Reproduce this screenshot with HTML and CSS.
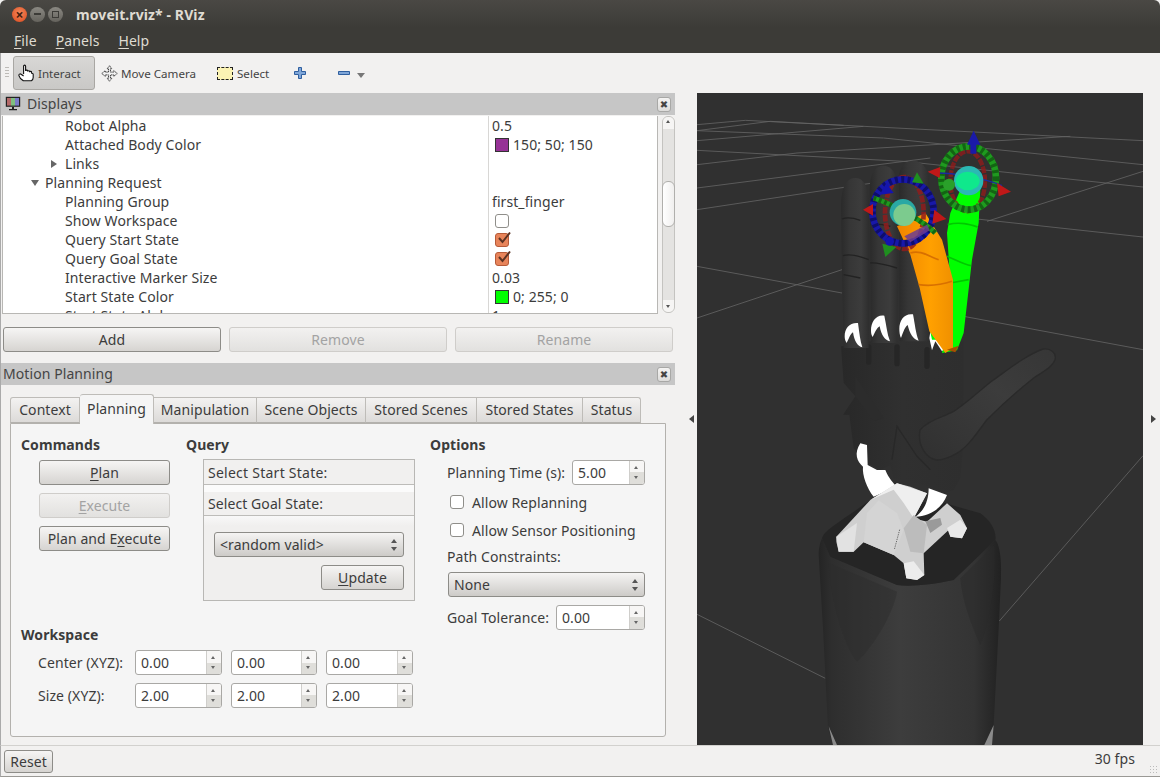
FILE: index.html
```html
<!DOCTYPE html>
<html lang="en">
<head>
<meta charset="utf-8">
<title>moveit.rviz* - RViz</title>
<link rel="stylesheet" href="styles.css">
</head>
<body>
<div class="window">
  <header class="titlebar">
    <div class="wm-buttons">
      <span class="wm wm-close">×</span>
      <span class="wm wm-min"><i class="wm-dash"></i></span>
      <span class="wm wm-max"><i class="wm-square"></i></span>
    </div>
    <span class="title-text">moveit.rviz* - RViz</span>
  </header>
  <nav class="menubar">
    <span class="menu-item"><u>F</u>ile</span>
    <span class="menu-item"><u>P</u>anels</span>
    <span class="menu-item"><u>H</u>elp</span>
  </nav>
  <div class="toolbar">
    <div class="grip"></div>
    <div class="tool tool-active">
      <svg class="ico-hand" viewBox="0 0 18 18"><path d="M5.600 10V2.200c0-1.500 2-1.500 2 0V7c0-1.200 2-1.200 2 0v.6c0-1.200 2-1.200 2 0v.6c0-1.100 2-1.100 2 0v1c0 .2 1.600-.2 1.600 1v3.300c0 1.600-.8 2.600-1.800 3.200H5.300C3.500 15.500 1.400 13.600.9 11.600c-.3-1.500 1.200-2 2.100-1.400L5.600 12" fill="#fff" stroke="#111" stroke-width="1.100"/></svg>
      <span>Interact</span>
    </div>
    <div class="tool tool-move">
      <svg class="ico-move" viewBox="0 0 18 18"><path d="M9 .8 11.500 4H10v3.500h3.500V6L17.200 9l-3.700 3v-1.500H10V14h1.500L9 17.200 6.500 14H8v-3.500H4.500V12L.8 9l3.700-3v1.500H8V4H6.500Z" fill="#f2f2f2" stroke="#333" stroke-width="1" stroke-dasharray="1.600 .6"/></svg>
      <span>Move Camera</span>
    </div>
    <div class="tool tool-select">
      <span class="ico-select"></span>
      <span>Select</span>
    </div>
    <svg class="ico-plus" viewBox="0 0 12 12"><path d="M4.500.5h3v4h4v3h-4v4h-3v-4h-4v-3h4Z" fill="#7fa6d8" stroke="#2f5f9f"/></svg>
    <svg class="ico-minus" viewBox="0 0 12 5"><path d="M.5.5h11v3H.5Z" fill="#7fa6d8" stroke="#2f5f9f"/></svg>
    <span class="tool-more"></span>
  </div>

  <main class="main">
    <section class="left">
      <div class="dock-title dock-title-icon">
        <svg class="ico-monitor" viewBox="0 0 16 15">
          <rect x=".8" y=".8" width="14.400" height="10" fill="#222"/>
          <rect x="2" y="2" width="4" height="7.600" fill="#b56a6a"/>
          <rect x="6" y="2" width="4" height="7.600" fill="#7fbf7f"/>
          <rect x="10" y="2" width="4" height="7.600" fill="#7a7ac8"/>
          <path d="M7 11h2v2h3v1.300H4V13h3Z" fill="#222"/>
        </svg>
        <span>Displays</span>
        <span class="dock-close">✖</span>
      </div>
      <div class="tree-wrap">
        <div class="tree">
          <div class="row"><div class="name lv3">Robot Alpha</div><div class="value">0.5</div></div>
          <div class="row"><div class="name lv3">Attached Body Color</div><div class="value"><i class="swatch swatch-purple"></i>150; 50; 150</div></div>
          <div class="row"><div class="name lv3"><i class="arrow-right"></i>Links</div><div class="value"></div></div>
          <div class="row"><div class="name lv2"><i class="arrow-down"></i>Planning Request</div><div class="value"></div></div>
          <div class="row"><div class="name lv3">Planning Group</div><div class="value">first_finger</div></div>
          <div class="row"><div class="name lv3">Show Workspace</div><div class="value"><i class="check"></i></div></div>
          <div class="row"><div class="name lv3">Query Start State</div><div class="value"><i class="check check-on"><svg viewBox="0 0 16 14"><path d="M3 7l3.500 4L14 1.500" fill="none" stroke="#5c3222" stroke-width="2"/></svg></i></div></div>
          <div class="row"><div class="name lv3">Query Goal State</div><div class="value"><i class="check check-on"><svg viewBox="0 0 16 14"><path d="M3 7l3.500 4L14 1.500" fill="none" stroke="#5c3222" stroke-width="2"/></svg></i></div></div>
          <div class="row"><div class="name lv3">Interactive Marker Size</div><div class="value">0.03</div></div>
          <div class="row"><div class="name lv3">Start State Color</div><div class="value"><i class="swatch swatch-green"></i>0; 255; 0</div></div>
          <div class="row"><div class="name lv3">Start State Alpha</div><div class="value">1</div></div>
        </div>
        <div class="scrollbar">
          <div class="sb-end sb-up"></div>
          <div class="sb-thumb"></div>
          <div class="sb-end sb-down"></div>
        </div>
      </div>
      <div class="dock-actions">
        <div class="btn btn-wide">Add</div>
        <div class="btn btn-wide btn-off">Remove</div>
        <div class="btn btn-wide btn-off">Rename</div>
      </div>
      <div class="splitter"></div>
      <div class="dock-title dock-title-plain">
        <span>Motion Planning</span>
        <span class="dock-close">✖</span>
      </div>
      <div class="tabs">
        <span class="tab tab-1">Context</span>
        <span class="tab tab-2 tab-active">Planning</span>
        <span class="tab tab-3">Manipulation</span>
        <span class="tab tab-4">Scene Objects</span>
        <span class="tab tab-5">Stored Scenes</span>
        <span class="tab tab-6">Stored States</span>
        <span class="tab tab-7">Status</span>
      </div>
      <div class="pane">
        <div class="col-left">
          <div class="top-row">
            <div class="commands">
              <h3>Commands</h3>
              <div class="btn cmd"><span><u>P</u>lan</span></div>
              <div class="btn cmd btn-off"><span><u>E</u>xecute</span></div>
              <div class="btn cmd"><span>Plan and E<u>x</u>ecute</span></div>
            </div>
            <div class="query">
              <h3>Query</h3>
              <div class="query-box">
                <div class="q-head q-head-1">Select Start State:</div>
                <div class="q-gap"></div>
                <div class="q-head q-head-2">Select Goal State:</div>
                <div class="q-body">
                  <div class="combo combo-q"><span>&lt;random valid&gt;</span><i class="updown"></i></div>
                  <div class="btn update"><span><u>U</u>pdate</span></div>
                </div>
              </div>
            </div>
          </div>
          <div class="workspace">
            <h3>Workspace</h3>
            <div class="ws-row">
              <span class="ws-label">Center (XYZ):</span>
              <div class="spin spin-87"><span class="spin-val">0.00</span><i class="spin-btn"></i></div>
              <div class="spin spin-86"><span class="spin-val">0.00</span><i class="spin-btn"></i></div>
              <div class="spin spin-87"><span class="spin-val">0.00</span><i class="spin-btn"></i></div>
            </div>
            <div class="ws-row">
              <span class="ws-label">Size (XYZ):</span>
              <div class="spin spin-87"><span class="spin-val">2.00</span><i class="spin-btn"></i></div>
              <div class="spin spin-86"><span class="spin-val">2.00</span><i class="spin-btn"></i></div>
              <div class="spin spin-87"><span class="spin-val">2.00</span><i class="spin-btn"></i></div>
            </div>
          </div>
        </div>
        <div class="col-right">
          <h3>Options</h3>
          <div class="opt-row opt-first"><span>Planning Time (s):</span><div class="spin spin-73"><span class="spin-val">5.00</span><i class="spin-btn"></i></div></div>
          <div class="chk-row chk-first"><i class="check check-plain"></i><span>Allow Replanning</span></div>
          <div class="chk-row"><i class="check check-plain"></i><span>Allow Sensor Positioning</span></div>
          <div class="opt-label">Path Constraints:</div>
          <div class="combo combo-opt"><span>None</span><i class="updown"></i></div>
          <div class="opt-row opt-last"><span>Goal Tolerance:</span><div class="spin spin-89"><span class="spin-val">0.00</span><i class="spin-btn"></i></div></div>
        </div>
      </div>
    </section>

    <div class="handle"><i class="tri-left"></i></div>

    <div class="view">
      <svg class="scene" viewBox="0 0 1338 1956" aria-label="3D view of a robot hand">
        <defs>
          <linearGradient id="fing" x1="0" x2="1" y1="0" y2="0">
            <stop offset="0" stop-color="#2a2a2a"/><stop offset=".3" stop-color="#363636"/><stop offset=".7" stop-color="#3c3c3c"/><stop offset="1" stop-color="#2c2c2c"/>
          </linearGradient>
          <linearGradient id="palm" x1="0" x2="1" y1="0" y2="0">
            <stop offset="0" stop-color="#282828"/><stop offset=".5" stop-color="#303030"/><stop offset="1" stop-color="#2e2e2e"/>
          </linearGradient>
          <linearGradient id="body" x1="0" x2="1" y1="0" y2="0">
            <stop offset="0" stop-color="#242424"/><stop offset=".07" stop-color="#2e2e2e"/><stop offset=".45" stop-color="#3d3d3d"/><stop offset=".85" stop-color="#343434"/><stop offset="1" stop-color="#212121"/>
          </linearGradient>
          <linearGradient id="thumb" x1="0" x2="1" y1="1" y2="0">
            <stop offset="0" stop-color="#303030"/><stop offset=".6" stop-color="#3c3c3c"/><stop offset="1" stop-color="#363636"/>
          </linearGradient>
          <linearGradient id="orange" x1="0" x2="1" y1="0" y2="0">
            <stop offset="0" stop-color="#f08400"/><stop offset=".6" stop-color="#ffa000"/><stop offset="1" stop-color="#f09000"/>
          </linearGradient>
        </defs>
        <rect width="1338" height="1956" fill="#303030"/>

        <g class="grid">
          <path d="M0 95 145 82 500 100 1338 143"/>
          <path d="M0 113 220 85 440 97"/>
          <path d="M0 143 500 100"/>
          <path d="M0 113 560 135 1338 215"/>
          <path d="M0 172 620 205 1338 282"/>
          <path d="M0 215 300 180 1120 130"/>
          <path d="M0 285 700 195"/>
          <path d="M0 350 560 265"/>
          <path d="M840 378 1338 432"/>
          <path d="M870 385 1338 235"/>
          <path d="M0 520 435 600"/>
          <path d="M0 675 435 530"/>
          <path d="M800 670 1338 770"/>
          <path d="M0 1564 385 1756"/>
          <path d="M907 1584 1338 1088"/>
        </g>

        <!-- base -->
        <path d="M365 1386C365 1356 375 1336 375 1336L400 1391 600 1476C640 1481 700 1476 770 1461L895 1341C905 1351 915 1386 912 1456L905 1606 890 1896C888 1926 870 1950 860 1956H420C400 1941 392 1916 392 1886L378 1606Z" fill="url(#body)"/>
        <path d="M395 1410 600 1496C590 1560 530 1660 480 1706 440 1660 400 1520 395 1410Z" fill="#2c2c2c" opacity=".45"/>
        <path d="M790 1456 892 1356C900 1450 880 1580 850 1656 820 1590 795 1520 790 1456Z" fill="#2a2a2a" opacity=".5"/>
        <path d="M375 1336C385 1311 400 1306 520 1221L745 1231 850 1261C880 1281 900 1316 895 1341L770 1461C700 1476 640 1481 600 1476L400 1391Z" fill="#252525"/>
        <path d="M395 1900 420 1956H408ZM890 1896 885 1956H862Z" fill="#8a8a8a"/>

        <!-- palm -->
        <path d="M432 760 510 745 800 745 798 1066 790 1156 770 1191 745 1201 700 1181 620 1161 590 1156 580 1116 550 1131 510 1110 470 1066 457 966 438 965 475 910 440 870Z" fill="url(#palm)"/>
        <path d="M475 850 560 975 530 985 475 910Z" fill="#2c2c2c"/>
        <path d="M585 1100 600 1000 660 1090 700 1130" fill="none" stroke="#282828" stroke-width="4"/>
        <path d="M515 762v45M600 762v50M690 770v50" stroke="#262626" stroke-width="16" stroke-linecap="round"/>

        <!-- left wrist band -->
        <path d="M490 1051 510 1056 512 1116 540 1131 565 1131C575 1156 590 1171 598 1181L530 1211C510 1186 495 1146 498 1121 480 1106 470 1081 490 1051Z" fill="#fff"/>

        <!-- bracket -->
        <path d="M418 1331 520 1221 600 1171 640 1181 690 1201 650 1276 690 1286 750 1231 790 1266 810 1306 795 1336 760 1331 755 1311 680 1381 682 1446 660 1461 628 1456 620 1411 590 1386 500 1348 470 1376 425 1376 418 1346Z" fill="#cfcfcf"/>
        <path d="M500 1348 510 1260 545 1222 600 1260 620 1311 590 1386Z" fill="#d4d4d4"/>
        <path d="M600 1171 690 1201 650 1276 620 1230 590 1190 520 1221Z" fill="#efefef"/>
        <path d="M418 1331 480 1290 470 1376 425 1376Z" fill="#e2e2e2"/>
        <path d="M620 1306 650 1266 690 1296 680 1381 640 1376Z" fill="#bcbcbc"/>
        <path d="M620 1411 650 1405 682 1446 660 1461 628 1456Z" fill="#ececec"/>
        <path d="M750 1305 790 1280 810 1306 795 1336 760 1331Z" fill="#e8e8e8"/>
        <path d="M685 1285 730 1275 735 1295 700 1320Z" fill="#9a9a9a"/>
        <path d="M608 1310 592 1370" stroke="#333" stroke-width="2" stroke-dasharray="4 3" fill="none"/>

        <!-- right wrist band -->
        <path d="M695 1186 750 1206C735 1245 700 1270 655 1271 680 1255 695 1225 695 1186Z" fill="#fff"/>

        <!-- fingers -->
        <path d="M432 340C432 280 450 252 478 255 505 258 515 290 517 340L518 530 515 765H440L435 540Z" fill="url(#fing)"/>
        <path d="M518 290C518 240 535 218 558 218 585 218 600 240 602 290L605 520 600 750H522Z" fill="url(#fing)"/>
        <path d="M605 260C605 220 625 203 650 203 680 205 695 230 697 270L700 480 695 745H608Z" fill="url(#fing)"/>
        <path d="M435 378C450 372 470 375 490 382M438 488C460 482 490 490 515 500M440 545 490 555M522 395C540 390 560 395 580 400M520 510C540 508 565 515 600 525" fill="none" stroke="#222" stroke-width="4"/>

        <!-- thumb -->
        <path d="M669 1011C690 985 730 975 769 956 810 930 850 890 889 861 940 825 990 785 1039 768 1060 765 1080 780 1074 800 1068 820 1040 835 1010 855 960 895 905 945 869 981 840 1020 810 1065 779 1081 755 1095 735 1101 719 1101 690 1097 660 1060 669 1011Z" fill="url(#thumb)" stroke="#2a2a2a" stroke-width="4"/>

        <!-- white finger bases -->
        <g fill="#fff">
          <path d="M443 730C443 705 458 688 483 690 487 720 490 745 496 763 482 760 472 745 468 718 460 722 455 740 449 750 445 745 443 738 443 730Z"/>
          <path d="M522 712C522 687 537 664 562 668 568 695 570 722 579 745 564 742 553 727 548 700 540 704 534 718 527 732 523 727 522 720 522 712Z"/>
          <path d="M607 707C607 682 622 660 648 664 654 695 656 720 665 743 649 740 638 722 632 696 625 700 619 716 612 735 608 728 607 715 607 707Z"/>
          <path d="M697 735 700 716 740 722 745 770 735 775 715 745 705 772Z"/>
        </g>

        <!-- green goal finger -->
        <path d="M790 290 850 285 845 390 825 500 800 720 780 772 735 780 745 740 760 570 750 420 760 360Z" fill="#00ff00"/>
        <path d="M752 395C790 385 820 395 842 402M750 490C775 500 800 515 822 518M760 570 815 560" fill="none" stroke="#00c800" stroke-width="5"/>
        <path d="M700 716 725 722 730 740 705 740Z" fill="#00ff00"/>

        <!-- orange start finger -->
        <path d="M600 400 685 360 735 440 768 560 768 765 745 780 697 715 668 585 640 485Z" fill="url(#orange)"/>
        <path d="M640 480C670 470 695 490 725 500M665 575C700 580 735 575 765 565" fill="none" stroke="#d87000" stroke-width="5"/>
        <path d="M750 770 785 758 775 778Z" fill="#a85000"/>

        <!-- goal marker -->
        <g fill="none">
          <ellipse cx="812" cy="265" rx="52" ry="90" stroke="#8f1c1c" stroke-width="13" stroke-dasharray="20 4" opacity=".8"/>
          <ellipse cx="815" cy="255" rx="82" ry="95" stroke="#1f9a1f" stroke-width="20"/>
          <ellipse cx="815" cy="255" rx="82" ry="95" stroke="#136413" stroke-width="20" stroke-dasharray="9 10"/>
          <path d="M720 240C770 240 860 255 915 278" stroke="#1a2aa0" stroke-width="4"/>
        </g>
        <circle cx="815" cy="263" r="44" fill="#2bb8b4"/>
        <ellipse cx="812" cy="264" rx="36" ry="28" fill="#0fe88c"/>
        <circle cx="756" cy="275" r="18" fill="#2aa02a"/>
        <path d="M830 113 850 155H838V182H820V155H810Z" fill="#1a1aa8"/>
        <path d="M692 236 730 222 728 255Z" fill="#c01818"/>
        <path d="M942 296 900 270 905 310Z" fill="#c01818"/>

        <!-- start marker -->
        <g fill="none">
          <ellipse cx="622" cy="360" rx="58" ry="108" stroke="#8f1c1c" stroke-width="14" stroke-dasharray="20 4" opacity=".85"/>
          <ellipse cx="618" cy="355" rx="92" ry="96" stroke="#1818a8" stroke-width="20"/>
          <ellipse cx="618" cy="355" rx="92" ry="96" stroke="#0e0e6c" stroke-width="20" stroke-dasharray="9 10"/>
          <path d="M530 315C590 335 680 385 715 420" stroke="#1f9a1f" stroke-width="15"/>
          <path d="M530 315C590 335 680 385 715 420" stroke="#136413" stroke-width="15" stroke-dasharray="8 9"/>
        </g>
        <circle cx="618" cy="358" r="40" fill="#2aa8a4"/>
        <circle cx="622" cy="366" r="33" fill="#7ccb8e"/>
        <path d="M622 430 690 395 698 412 640 448Z" fill="#6c3c90" opacity=".85"/>
        <path d="M498 350 528 333 528 368Z" fill="#c01818"/>
        <path d="M748 378 712 350 706 392Z" fill="#c01818"/>
        <path d="M660 238 680 272 645 268Z" fill="#1f8f1f"/>
        <path d="M565 492 598 462 556 452Z" fill="#1f8f1f"/>
        <path d="M568 270 590 300 548 305Z" fill="#1414b0"/>
        <circle cx="578" cy="445" r="13" fill="#1414b0"/>
      </svg>
    </div>

    <div class="handle handle-right"><i class="tri-right"></i></div>
  </main>

  <footer class="statusbar">
    <div class="btn reset">Reset</div>
    <span class="fps">30 fps</span>
    <i class="size-grip"></i>
  </footer>
</div>
</body>
</html>
```
FILE: styles.css
```css
* { box-sizing: border-box; }
html, body { margin: 0; padding: 0; background: #fff; }
body {
  font-family: "Noto Sans", "Open Sans", "DejaVu Sans", sans-serif;
  font-size: 14px;
  letter-spacing: .08px;
  color: #3c3c3c;
}
i { font-style: normal; display: block; flex: none; }
u { text-decoration-thickness: 1px; text-underline-offset: 2px; }
h3 { margin: 0; font-size: 14px; line-height: 16px; font-weight: 700; color: #3c3c3c; }

.window { width: 1160px; height: 777px; display: flex; flex-direction: column; overflow: hidden; background: #f2f1f0; }

/* title and menu */
.titlebar {
  height: 28px; flex: none; display: flex; align-items: center;
  background: linear-gradient(#4a4844, #3c3b37);
  border-radius: 6px 6px 0 0;
}
.wm-buttons { display: flex; gap: 3px; margin-left: 12px; width: 64px; }
.wm { width: 15px; height: 15px; border-radius: 50%; display: flex; align-items: center; justify-content: center; }
.wm-close { background: radial-gradient(circle at 50% 40%, #f58a5c, #d9471c); color: #43200f; font-size: 14px; line-height: 15px; font-weight: 700; }
.wm-min, .wm-max { background: linear-gradient(#8a8882, #65635d); }
.wm-dash { width: 7px; height: 2px; background: #3c3b37; }
.wm-square { width: 7px; height: 7px; border: 1px solid #3c3b37; }
.title-text { font-size: 14px; font-weight: 700; color: #dfdbd2; letter-spacing: .1px; }
.menubar { height: 25px; flex: none; display: flex; align-items: center; background: #3c3b37; padding-left: 14px; gap: 19px; }
.menu-item { color: #dfdbd2; font-size: 14px; line-height: 20px; }

/* toolbar */
.toolbar { height: 40px; flex: none; display: flex; align-items: center; border-left: 1px solid #aaa; background: #f2f1f0; font-size: 11.6px; letter-spacing: 0; color: #444; }
.grip { width: 4px; height: 12px; margin-left: 4px; margin-right: 4px; background: repeating-linear-gradient(#bdbbb7 0 1px, transparent 1px 3px); }
.tool { display: flex; align-items: center; }
.tool-active { width: 82px; height: 34px; padding-left: 4px; gap: 2px; background: linear-gradient(#d8d7d5, #c9c8c6); border: 1px solid #a9a7a3; border-radius: 3px; }
.ico-hand { width: 18px; height: 18px; }
.tool-move { margin-left: 6px; gap: 3px; width: 116px; }
.ico-move { width: 17px; height: 17px; }
.tool-select { gap: 4px; }
.ico-select { width: 16px; height: 13px; background: #fbf3b4; border: 1px dashed #222; }
.ico-plus { width: 12px; height: 12px; margin-left: 25px; }
.ico-minus { width: 12px; height: 5px; margin-left: 32px; }
.tool-more { width: 0; height: 0; margin: 5px 0 0 7px; border: 4px solid transparent; border-top: 5px solid #777; border-bottom: 0; }

/* main */
.main { height: 652px; flex: none; display: flex; }
.left { width: 675px; flex: none; display: flex; flex-direction: column; padding-left: 1px; border-left: 1px solid #aaa; }
.handle { width: 22px; flex: none; display: flex; align-items: center; justify-content: flex-end; padding-right: 3px; }
.handle-right { width: 17px; justify-content: flex-end; padding-right: 4px; }
.tri-left { width: 0; height: 0; border: 4px solid transparent; border-right: 5px solid #444; border-left: 0; }
.tri-right { width: 0; height: 0; border: 4px solid transparent; border-left: 5px solid #444; border-right: 0; }
.view { width: 446px; flex: none; background: #303030; }
.scene { display: block; width: 446px; height: 652px; }
.grid path { fill: none; stroke: #666; stroke-width: 2.4; }

/* docks */
.dock-title { height: 22px; flex: none; display: flex; align-items: center; background: #c6c6c6; margin-left: -1px; padding-bottom: 2px; font-size: 14px; color: #444; position: relative; }
.dock-title-icon { padding-left: 4px; gap: 6px; }
.dock-title-plain { padding-left: 2px; }
.ico-monitor { width: 16px; height: 15px; }
.dock-close { margin-left: auto; margin-right: 4px; margin-top: 2px; width: 14px; height: 15px; background: linear-gradient(#f4f3f2, #dddcda); border: 1px solid #a8a8a6; border-radius: 3px; font-size: 10px; line-height: 13px; text-align: center; color: #444; }

.tree-wrap { height: 198px; flex: none; margin-top: 1px; display: flex; }
.tree { width: 656px; flex: none; height: 198px; overflow: hidden; background: #fff; border-bottom: 1px solid #b8b7b4; border-left: 1px solid #b8b7b4; border-right: 1px solid #b8b7b4; }
.row { height: 19px; display: flex; line-height: 19px; font-size: 14px; }
.name { width: 485px; flex: none; display: flex; align-items: center; position: relative; }
.lv3 { padding-left: 62px; }
.lv2 { padding-left: 42px; }
.value { flex: 1; border-left: 1px solid #d8d7d5; padding-left: 3px; display: flex; align-items: center; }
.arrow-right { position: absolute; left: 48px; top: 6px; width: 0; height: 0; border: 4px solid transparent; border-left: 6px solid #666; border-right: 0; }
.arrow-down { position: absolute; left: 28px; top: 7px; width: 0; height: 0; border: 4px solid transparent; border-top: 6px solid #666; border-bottom: 0; }
.swatch { width: 14px; height: 14px; margin: 0 4px 0 3px; border: 1px solid #333; }
.swatch-purple { background: #963296; }
.swatch-green { background: #00ff00; }
.check { width: 14px; height: 14px; margin-left: 3px; border: 1px solid #8f8e8a; border-radius: 3px; background: #fff; position: relative; }
.check-plain { margin-left: 0; }
.check-on { background: #e8845a; border-color: #b65a38; }
.check-on svg { position: absolute; left: 0; top: -3px; width: 16px; height: 14px; }

.scrollbar { width: 13px; height: 197px; flex: none; margin-left: 4px; display: flex; flex-direction: column; background: #e4e3e1; border: 1px solid #c4c3c0; border-radius: 6px; position: relative; }
.sb-end { height: 12px; flex: none; background: #f6f5f4; border-radius: 5px 5px 0 0; position: relative; }
.sb-down { border-radius: 0 0 5px 5px; margin-top: auto; }
.sb-up::after, .sb-down::after { content: ""; position: absolute; left: 3px; width: 0; height: 0; border: 2.5px solid transparent; }
.sb-up::after { top: 3px; border-bottom: 3px solid #555; border-top: 0; }
.sb-down::after { top: 5px; border-top: 3px solid #555; border-bottom: 0; }
.sb-thumb { position: absolute; left: -1px; top: 64px; width: 13px; height: 46px; background: linear-gradient(90deg, #fff, #f0efee); border: 1px solid #b0afac; border-radius: 6px; }

.dock-actions { display: flex; gap: 8px; margin-top: 13px; padding-left: 1px; }
.btn { display: flex; align-items: center; justify-content: center; background: linear-gradient(#f6f5f4, #d6d4d1); border: 1px solid #8d8c88; border-radius: 3px; color: #3c3c3c; flex: none; }
.btn-wide { width: 218px; height: 25px; }
.btn-off { background: linear-gradient(#f2f1f0, #e2e1df); border-color: #cfcdca; color: #a3a3a3; }
.splitter { height: 11px; flex: none; }

/* tabs */
.tabs { display: flex; align-items: flex-end; height: 29px; margin-top: 9px; margin-left: 8px; flex: none; font-size: 14px; position: relative; z-index: 1; }
.tab { height: 26px; padding-bottom: 2px; display: flex; align-items: center; justify-content: center; background: linear-gradient(#f3f2f1, #dcdad8); border: 1px solid #bebcb8; border-bottom: 1px solid #b3b1ad; border-left: 0; flex: none; }
.tab-1 { width: 70px; border-left: 1px solid #bebcb8; border-radius: 3px 0 0 0; }
.tab-2 { width: 74px; }
.tab-3 { width: 103px; }
.tab-4 { width: 109px; }
.tab-5 { width: 111px; }
.tab-6 { width: 106px; }
.tab-7 { width: 58px; border-radius: 0 3px 0 0; }
.tab-active { height: 30px; margin-bottom: -1px; background: #f5f5f5; border: 1px solid #bebcb8; border-bottom: 0; border-left: 0; border-radius: 3px 3px 0 0; padding-bottom: 3px; }
.pane { width: 656px; height: 314px; margin-left: 8px; flex: none; display: flex; background: #f5f5f5; border: 1px solid #b3b1ad; border-radius: 0 0 3px 3px; padding: 13px 0 0 10px; }
.col-left { width: 409px; flex: none; }
.col-right { width: 215px; flex: none; }

.top-row { display: flex; height: 164px; }
.commands { width: 165px; flex: none; display: flex; flex-direction: column; }
.commands .cmd:nth-child(2) { margin-top: 7px; }
.cmd { width: 131px; height: 25px; margin-left: 18px; margin-bottom: 8px; }
.query { flex: none; width: 229px; }
.query-box { margin: 6px 0 0 17px; width: 212px; height: 142px; border: 1px solid #b8b7b4; background: #f0efee; display: flex; flex-direction: column; }
.q-head { display: flex; align-items: center; padding-left: 4px; flex: none; background: #f1f0ef; }
.q-head-1 { height: 25px; border-bottom: 1px solid #bdbcb9; letter-spacing: .25px; }
.q-gap { height: 7px; flex: none; background: #fbfbfb; }
.q-head-2 { height: 24px; border-bottom: 1px solid #bdbcb9; }
.q-body { flex: 1; background: linear-gradient(#f8f8f8 0, #f0efee 10px); padding: 16px 10px 0 10px; display: flex; flex-direction: column; align-items: flex-end; }
.combo { height: 25px; display: flex; align-items: center; justify-content: space-between; background: linear-gradient(#f5f4f3, #cdcbc8); border: 1px solid #8d8c88; border-radius: 3px; padding: 0 5px 0 5px; flex: none; }
.combo-q { width: 190px; margin-right: 0; }
.combo-opt { width: 197px; margin: 7px 0 0 18px; }
.updown { width: 7px; height: 12px; position: relative; }
.updown::before, .updown::after { content: ""; position: absolute; left: 0; width: 0; height: 0; border: 3.5px solid transparent; }
.updown::before { top: 0; border-bottom: 4px solid #555; border-top: 0; }
.updown::after { bottom: 0; border-top: 4px solid #555; border-bottom: 0; }
.update { width: 83px; height: 25px; margin-top: 8px; }

.workspace { margin-top: 26px; }
.ws-row { display: flex; align-items: center; margin-top: 7px; padding-left: 17px; }
.ws-row + .ws-row { margin-top: 8px; }
.ws-label { width: 97px; flex: none; }
.spin { height: 25px; display: flex; background: #fff; border: 1px solid #a9a8a5; border-radius: 3px; overflow: hidden; flex: none; }
.spin + .spin { margin-left: 9px; }
.spin-73 { width: 73px; }
.spin-86 { width: 86px; }
.spin-87 { width: 87px; }
.spin-89 { width: 89px; }
.spin-val { flex: 1; padding-left: 5px; line-height: 23px; color: #3c3c3c; }
.spin-btn { width: 15px; border-left: 1px solid #cfcecb; background: linear-gradient(#f7f6f5 50%, #dfdeda 50%); position: relative; }
.spin-btn::before, .spin-btn::after { content: ""; position: absolute; left: 4px; width: 0; height: 0; border: 2.5px solid transparent; }
.spin-btn::before { top: 5px; border-bottom: 3px solid #666; border-top: 0; }
.spin-btn::after { bottom: 5px; border-top: 3px solid #666; border-bottom: 0; }

.opt-row { display: flex; align-items: center; justify-content: space-between; width: 198px; margin-left: 17px; }
.opt-first { margin-top: 7px; }
.opt-last { margin-top: 8px; }
.chk-row { height: 28px; display: flex; align-items: center; gap: 8px; margin-left: 20px; }
.chk-first { margin-top: 3px; }
.opt-label { margin: 5px 0 0 17px; line-height: 16px; }

/* status */
.statusbar { flex: 1; display: flex; align-items: center; border-top: 1px solid #d2d1ce; border-bottom: 1px solid #9a9995; border-left: 1px solid #aaa; position: relative; padding: 0 25px 0 3px; }
.reset { width: 49px; height: 23px; }
.fps { margin-left: auto; margin-top: -5px; }
.size-grip { position: absolute; right: 1px; bottom: 1px; width: 10px; height: 10px; background: radial-gradient(circle, #bbb 0.8px, transparent 1px) 0 0 / 3px 3px; }
```
